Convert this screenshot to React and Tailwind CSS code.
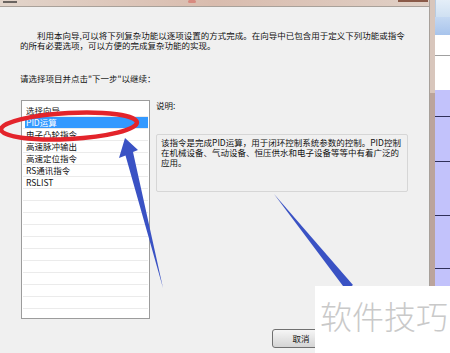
import React from "react";

const items = ["选择向导", "PID运算", "电子凸轮指令", "高速脉冲输出", "高速定位指令", "RS通讯指令", "RSLIST"];
const emptyRows = Array.from({ length: 10 });

function ListRow({ label, active }) {
  return (
    <div className="h-[12px] border-b border-[#ebebeb] ml-[1px] mr-[1px]">
      {label ? (
        <div
          className={`ml-[2px] h-[11px] pl-[1px] leading-[11px] ${
            active ? "bg-[#3399ff] text-white" : "text-[#111]"
          }`}
        >
          {label}
        </div>
      ) : null}
    </div>
  );
}

function RightStrip() {
  return (
    <div className="flex w-[15px] flex-col">
      <div className="h-[17px] bg-gradient-to-b from-[#e4eef8] to-[#cfe0f2] border-l border-[#b8cbe0]" />
      <div className="h-[18px] bg-gradient-to-b from-[#c4d8f2] to-[#a8c4ec]" />
      <div className="h-[20px] bg-white" />
      <div className="h-px bg-[#a0a0a0]" />
      <div className="h-[34px] bg-white" />
      <div className="flex-1 bg-[#c2c2fb]">
        <div className="h-[27px] border-b border-[#30305a]" />
        <div className="h-[45px] border-b border-[#30305a]" />
        <div className="h-[54px] border-b border-[#30305a]" />
        <div className="h-[53px] border-b border-[#30305a]" />
      </div>
    </div>
  );
}

export default function App() {
  return (
    <div
      className="relative flex h-[353px] w-[450px] overflow-hidden bg-[#f0f0f0] text-[8.5px] text-[#111]"
      style={{ fontFamily: '"Noto Sans CJK SC", "Noto Sans", sans-serif' }}
    >
      {/* dialog */}
      <div className="flex w-[430px] flex-col border-r border-[#a7a09a]">
        <div className="relative h-[7px] border-b border-[#a9a19a] bg-gradient-to-r from-[#e2d4ca] via-[#d9bcae] to-[#e0d0c6]">
          <div className="absolute left-[3px] top-[1px] h-[2px] w-[14px] bg-[#6a6460]" />
          <div className="absolute left-[188px] top-0 h-[3px] w-[8px] rounded-full bg-[#d88a80]" />
          <div className="absolute left-[398px] top-0 h-[2px] w-[30px] bg-[#8a5a48]" />
        </div>

        <div className="flex flex-1 flex-col pl-[20px] pt-[23px]">
          <div className="whitespace-nowrap leading-[10px]">
            <div className="pl-[17px]">利用本向导,可以将下列复杂功能以逐项设置的方式完成。在向导中已包含用于定义下列功能或指令</div>
            <div>的所有必要选项，可以方便的完成复杂功能的实现。</div>
          </div>
          <div className="mt-[23px] leading-[10px]">请选择项目并点击"下一步"以继续：</div>

          <div className="mt-[17px] flex">
            <div className="ml-px h-[219px] w-[129px] overflow-hidden border border-[#9c9c9c] bg-white pt-[4px]">
              {items.map((label, i) => (
                <ListRow key={label} label={label} active={i === 1} />
              ))}
              {emptyRows.map((_, i) => (
                <ListRow key={i} />
              ))}
            </div>

            <div className="ml-[6px] flex flex-col">
              <div className="leading-[10px]">说明:</div>
              <div className="mt-[24px] h-[58px] w-[252px] rounded-[2px] border border-[#d6d6d6] px-[4px] pt-[2px] leading-[10px]">
                该指令是完成PID运算，用于闭环控制系统参数的控制。PID控制在机械设备、气动设备、恒压供水和电子设备等等中有着广泛的应用。
              </div>
            </div>
          </div>

          <div className="mt-[10px] flex pl-[252px]">
            <button className="h-[19px] w-[60px] rounded-[3px] border border-[#707070] bg-gradient-to-b from-[#f6f6f6] to-[#d4d4d4] pr-[2px] text-[8.5px] text-[#111]">
              取消
            </button>
          </div>
        </div>
      </div>

      {/* frame strip */}
      <div className="flex w-[5px] flex-col">
        <div className="h-[93px] bg-[#d8c6bc]" />
        <div className="flex-1 bg-[#bba49c]" />
      </div>

      <RightStrip />

      {/* annotations */}
      <svg className="pointer-events-none absolute left-0 top-0" width="450" height="353" viewBox="0 0 450 353">
        <ellipse
          cx="69"
          cy="126"
          rx="68"
          ry="13"
          transform="rotate(-3 69 126)"
          fill="none"
          stroke="#e3242b"
          strokeWidth="4.5"
        />
        <polygon points="125,138 119,158 125.5,155.5 163,288 133,152 138,150" fill="#3a52c4" />
        <polygon points="274,194 353,285 346,290" fill="#3a52c4" />
      </svg>

      {/* watermark */}
      <div className="absolute left-[315px] top-[286px] flex h-[67px] w-[135px] items-start bg-white pl-[5px] pt-[13px]">
        <span className="text-[32px] font-light leading-[32px] text-[#c9c9c9]">软件技巧</span>
      </div>
    </div>
  );
}
